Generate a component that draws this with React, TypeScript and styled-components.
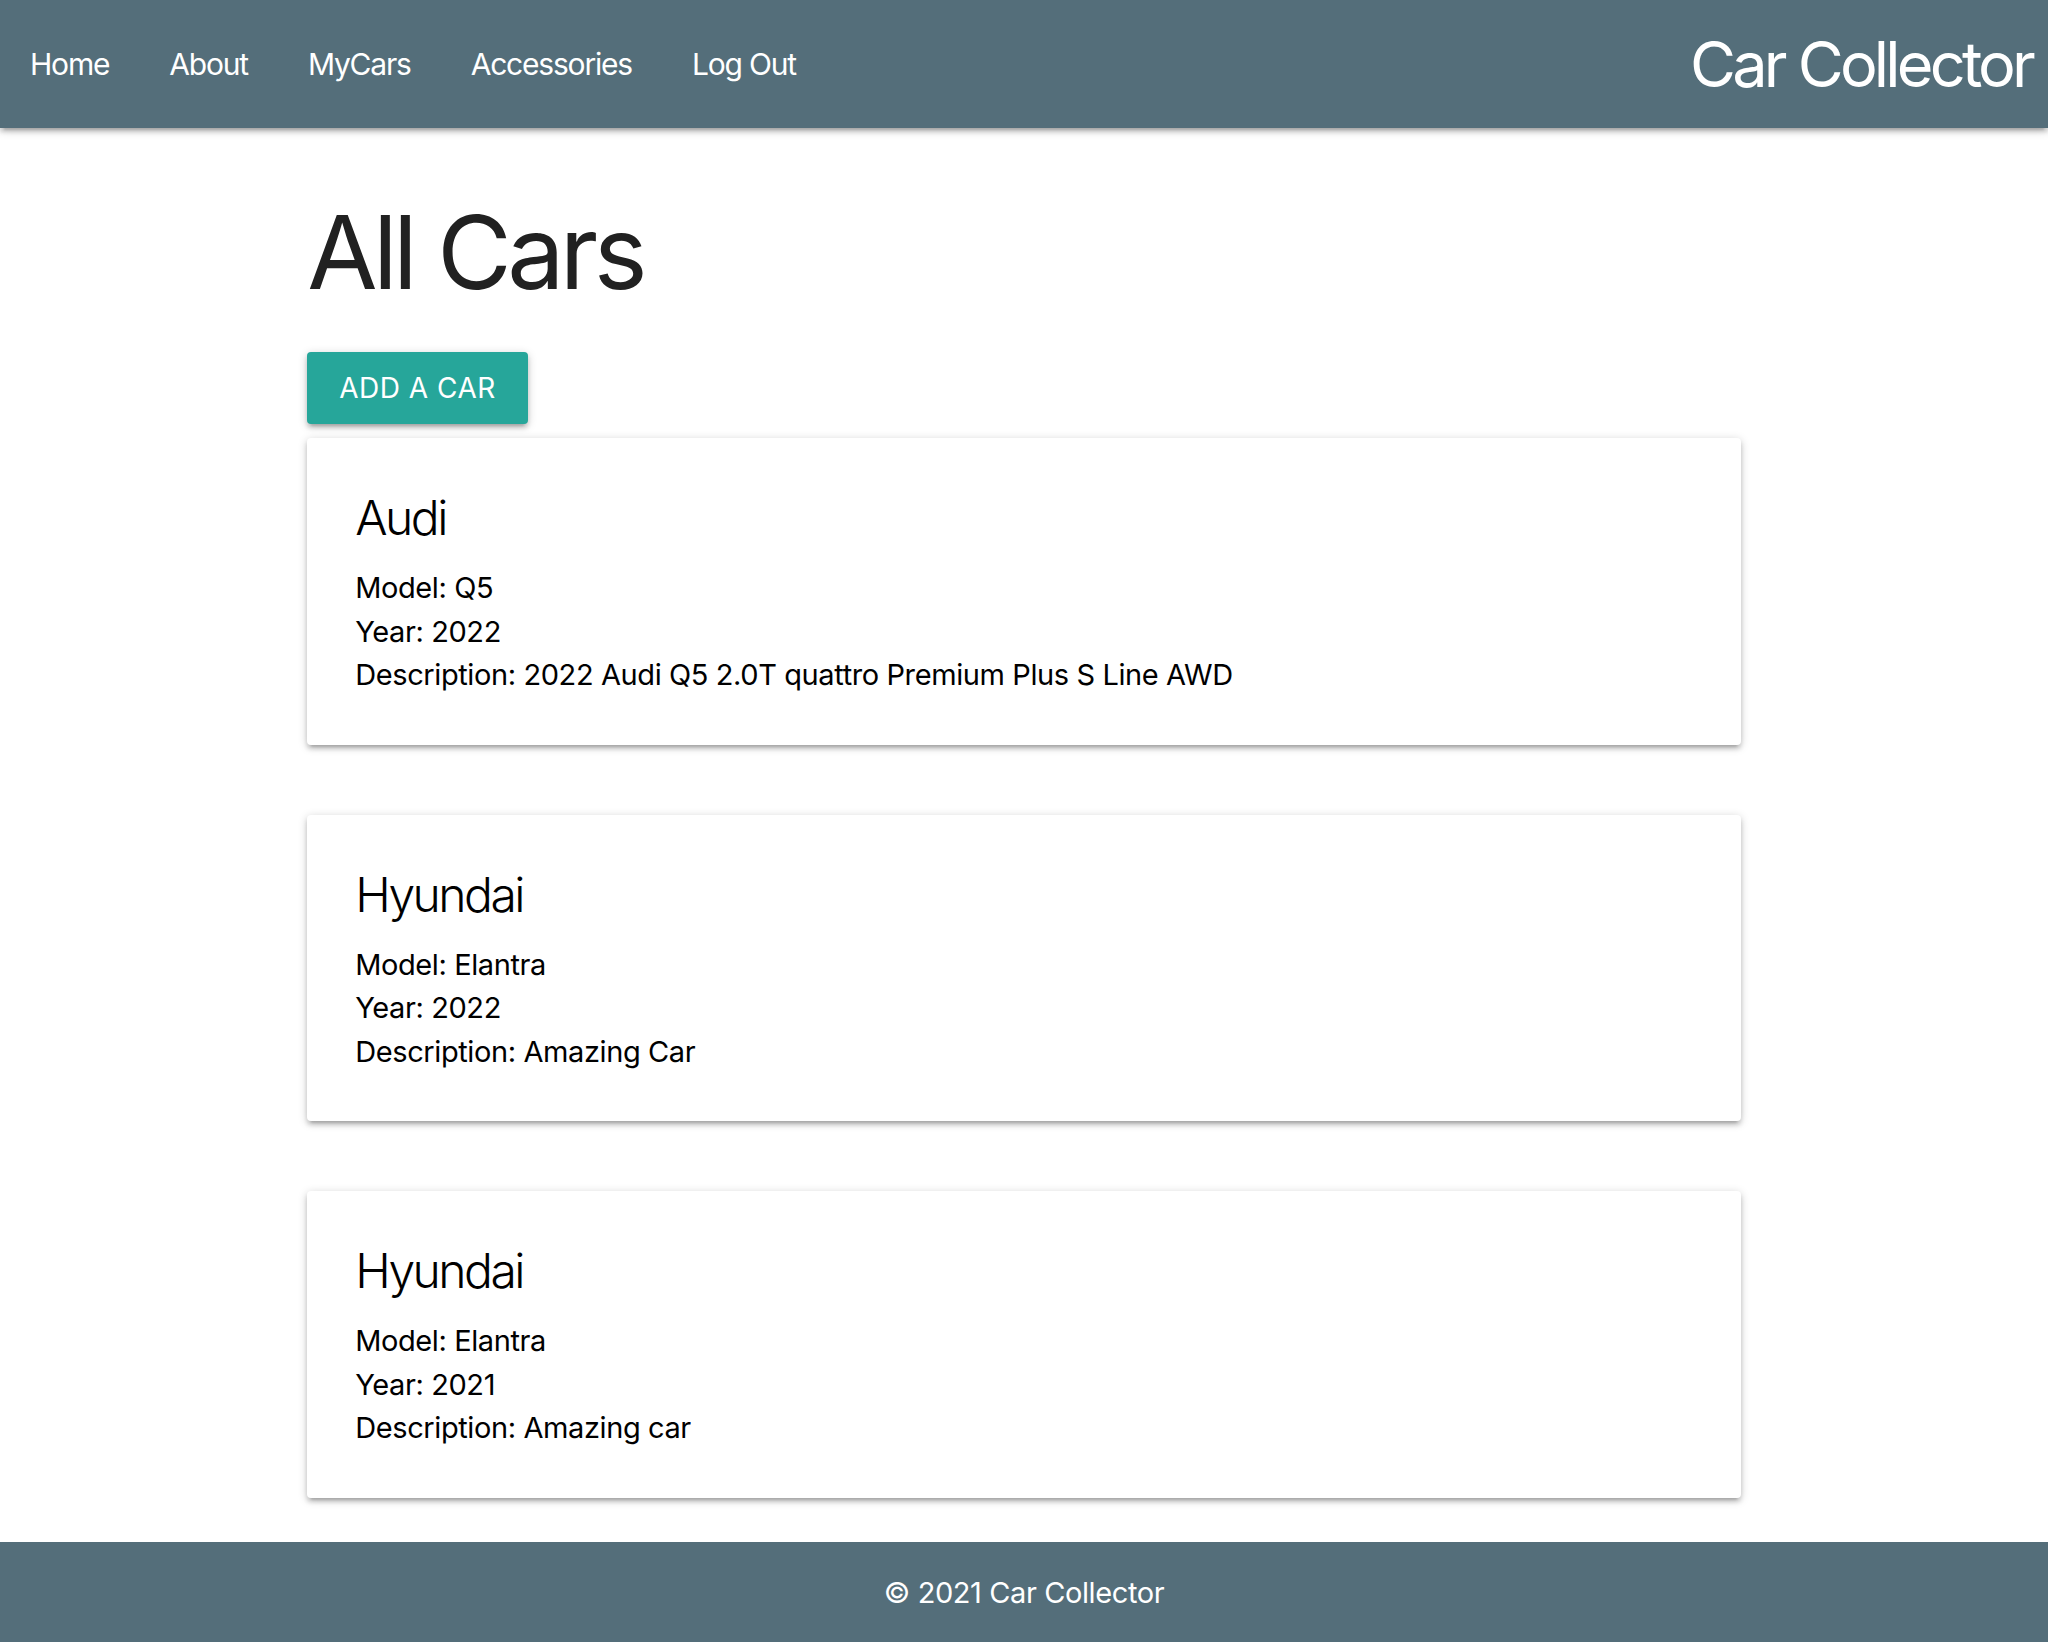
import React from "react";
import styled, { createGlobalStyle } from "styled-components";

const GlobalStyle = createGlobalStyle`
  html, body {
    margin: 0;
    padding: 0;
    background: #ffffff;
  }
  body {
    font-family: Inter, "Noto Sans", "DejaVu Sans", sans-serif;
    color: rgba(0, 0, 0, 0.87);
    -webkit-font-smoothing: antialiased;
  }
  * { box-sizing: border-box; }
`;

const Page = styled.div`
  display: flex;
  flex-direction: column;
  min-height: 1642px;
`;

const Nav = styled.nav`
  position: relative;
  display: flex;
  align-items: center;
  justify-content: space-between;
  height: 128px;
  background: #546e7a;
  color: #ffffff;
  box-shadow: 0 4px 4px 0 rgba(0, 0, 0, 0.14), 0 6px 2px -4px rgba(0, 0, 0, 0.12),
    0 2px 10px 0 rgba(0, 0, 0, 0.2);
  z-index: 2;
`;

const NavList = styled.ul`
  display: flex;
  margin: 0;
  padding: 0;
  list-style: none;
  height: 100%;
`;

const NavLink = styled.a`
  display: block;
  padding: 0 30px;
  line-height: 128px;
  font-size: 30px;
  letter-spacing: -1.2px;
  color: #ffffff;
  text-decoration: none;
`;

const Brand = styled.a`
  margin-right: 16px;
  font-size: 63px;
  line-height: 128px;
  letter-spacing: -3.8px;
  color: #ffffff;
  text-decoration: none;
`;

const Main = styled.main`
  flex: 1;
  width: 70%;
  margin: 0 auto;
  padding-bottom: 44px;
`;

const Title = styled.h2`
  margin: 68px 0 44px;
  font-size: 102px;
  line-height: 112px;
  font-weight: 400;
  letter-spacing: -4.6px;
  color: #212121;
`;

const AddButton = styled.a`
  display: inline-block;
  height: 72px;
  padding: 0 32px;
  line-height: 72px;
  font-size: 28px;
  letter-spacing: 0.5px;
  text-transform: uppercase;
  color: #ffffff;
  background: #26a69a;
  border-radius: 4px;
  text-decoration: none;
  box-shadow: 0 4px 4px 0 rgba(0, 0, 0, 0.14), 0 6px 2px -4px rgba(0, 0, 0, 0.12),
    0 2px 10px 0 rgba(0, 0, 0, 0.2);
`;

const CardList = styled.div`
  display: flex;
  flex-direction: column;
  gap: 70px;
  margin-top: 14px;
`;

const Card = styled.div`
  background: #ffffff;
  border-radius: 4px;
  padding: 48px;
  color: #000000;
  box-shadow: 0 4px 4px 0 rgba(0, 0, 0, 0.14), 0 6px 2px -4px rgba(0, 0, 0, 0.12),
    0 2px 10px 0 rgba(0, 0, 0, 0.2);
`;

const CardTitle = styled.span`
  display: block;
  margin-bottom: 16px;
  font-size: 48px;
  line-height: 64px;
  font-weight: 300;
  letter-spacing: -2.5px;
`;

const CardLine = styled.p`
  margin: 0;
  font-size: 29px;
  line-height: 43.5px;
  letter-spacing: -0.4px;
`;

const Footer = styled.footer`
  height: 102px;
  background: #546e7a;
  color: #ffffff;
  text-align: center;
  line-height: 102px;
  font-size: 29px;
  letter-spacing: -0.4px;
`;

type Car = { make: string; model: string; year: number; description: string };

const cars: Car[] = [
  {
    make: "Audi",
    model: "Q5",
    year: 2022,
    description: "2022 Audi Q5 2.0T quattro Premium Plus S Line AWD",
  },
  { make: "Hyundai", model: "Elantra", year: 2022, description: "Amazing Car" },
  { make: "Hyundai", model: "Elantra", year: 2021, description: "Amazing car" },
];

const links = ["Home", "About", "MyCars", "Accessories", "Log Out"];

export default function App() {
  return (
    <Page>
      <GlobalStyle />
      <Nav>
        <NavList>
          {links.map((l) => (
            <li key={l}>
              <NavLink href="#">{l}</NavLink>
            </li>
          ))}
        </NavList>
        <Brand href="#">Car Collector</Brand>
      </Nav>
      <Main>
        <Title>All Cars</Title>
        <AddButton href="#">Add a Car</AddButton>
        <CardList>
          {cars.map((c, i) => (
            <Card key={i}>
              <CardTitle>{c.make}</CardTitle>
              <CardLine>Model: {c.model}</CardLine>
              <CardLine>Year: {c.year}</CardLine>
              <CardLine>Description: {c.description}</CardLine>
            </Card>
          ))}
        </CardList>
      </Main>
      <Footer>© 2021 Car Collector</Footer>
    </Page>
  );
}
